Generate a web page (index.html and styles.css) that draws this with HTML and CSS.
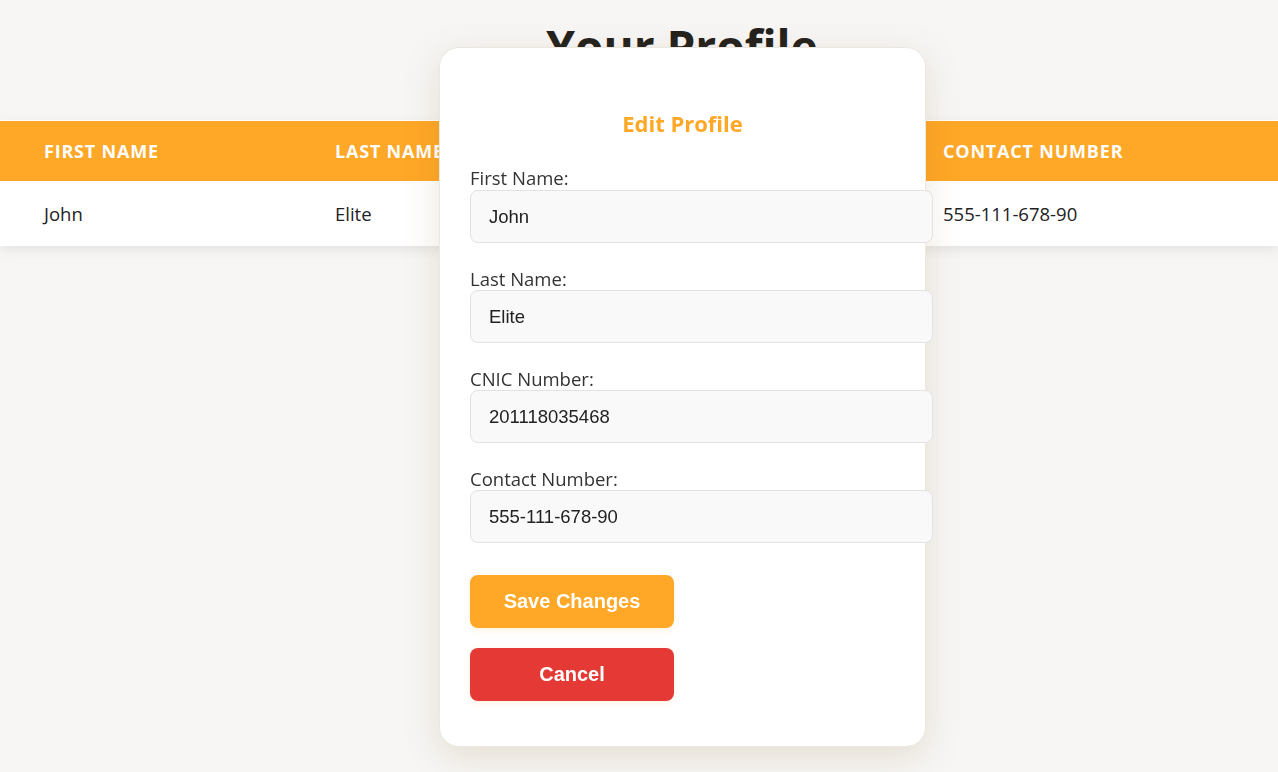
FILE: index.html
```html
<!DOCTYPE html>
<html lang="en">
<head>
<meta charset="utf-8">
<title>Your Profile</title>
<link rel="stylesheet" href="styles.css">
</head>
<body>
<main class="page">
  <h1 class="page-title">Your Profile</h1>
  <table class="profile-table">
    <colgroup>
      <col class="col-a"><col class="col-b"><col class="col-c"><col class="col-d">
    </colgroup>
    <thead>
      <tr><th>First Name</th><th>Last Name</th><th>CNIC Number</th><th>Contact Number</th></tr>
    </thead>
    <tbody>
      <tr><td>John</td><td>Elite</td><td>201118035468</td><td>555-111-678-90</td></tr>
    </tbody>
  </table>
</main>

<div class="modal">
  <h2 class="modal-title">Edit Profile</h2>
  <form class="edit-form">
    <div class="field">
      <label class="field-label" for="fn">First Name:</label>
      <input class="field-input" id="fn" type="text" value="John">
    </div>
    <div class="field">
      <label class="field-label" for="ln">Last Name:</label>
      <input class="field-input" id="ln" type="text" value="Elite">
    </div>
    <div class="field">
      <label class="field-label" for="cn">CNIC Number:</label>
      <input class="field-input" id="cn" type="text" value="201118035468">
    </div>
    <div class="field">
      <label class="field-label" for="ph">Contact Number:</label>
      <input class="field-input" id="ph" type="text" value="555-111-678-90">
    </div>
    <div class="actions">
      <button type="button" class="btn btn-save">Save Changes</button>
      <button type="button" class="btn btn-cancel">Cancel</button>
    </div>
  </form>
</div>
</body>
</html>
```

FILE: styles.css
```css
html, body {
  margin: 0;
  padding: 0;
}
body {
  background: #f7f6f5;
  font-family: "Open Sans", "Noto Sans", sans-serif;
  color: #222;
  height: 772px;
  overflow: hidden;
}
.page {
  padding-top: 18px;
}
.page-title {
  margin: 0 0 45px;
  padding-left: 86px;
  text-align: center;
  font-size: 46px;
  line-height: 57px;
  font-weight: 700;
  color: #23211d;
}
.profile-table {
  width: 100%;
  border-collapse: collapse;
  background: #fff;
  border-top: 1px solid #fff;
  box-shadow: 0 4px 12px rgba(0, 0, 0, 0.08);
  table-layout: fixed;
}
.col-a { width: 291px; }
.col-b { width: 304px; }
.col-c { width: 304px; }
.col-d { width: auto; }
.profile-table th {
  background: #ffa726;
  color: #fff;
  text-transform: uppercase;
  text-align: left;
  font-size: 18px;
  font-weight: 700;
  letter-spacing: 0.8px;
  height: 60px;
  padding: 0 0 0 44px;
  white-space: nowrap;
  overflow: hidden;
}
.profile-table td {
  height: 65px;
  padding: 0 0 0 44px;
  font-size: 18.5px;
  color: #222;
}

.modal {
  position: fixed;
  left: 439px;
  top: 47px;
  width: 425px;
  padding: 30px 30px 45px;
  background: #fff;
  border: 1px solid #ebe7e1;
  border-radius: 20px;
  box-shadow: 0 10px 36px rgba(150, 110, 50, 0.18);
}
.modal-title {
  margin: 31px 0 29px;
  text-align: center;
  color: #ffa726;
  font-size: 22px;
  font-weight: 700;
  line-height: 28px;
}
.edit-form {
  display: flex;
  flex-direction: column;
}
.field {
  display: flex;
  flex-direction: column;
  margin-bottom: 24px;
}
.field-label {
  font-size: 18.5px;
  line-height: 24px;
  color: #333;
}
.field-input {
  width: 425px;
  height: 19px;
  padding: 16px 18px;
  border: 1px solid #e2e2e2;
  border-radius: 8px;
  background: #f9f9f9;
  font-family: "Liberation Sans", Arial, sans-serif;
  font-size: 18.5px;
  color: #222;
  outline: none;
}
.field + .field .field-label {
  line-height: 23px;
}
.actions {
  display: flex;
  flex-direction: column;
  align-items: flex-start;
  gap: 20px;
  margin-top: 8px;
}
.btn {
  width: 204px;
  height: 53px;
  border: none;
  border-radius: 8px;
  color: #fff;
  font-family: "Liberation Sans", Arial, sans-serif;
  font-size: 20px;
  font-weight: 700;
  cursor: pointer;
  box-shadow: 0 2px 6px rgba(255, 167, 38, 0.15);
}
.btn-save { background: #ffa726; }
.btn-cancel { background: #e53935; }
```
